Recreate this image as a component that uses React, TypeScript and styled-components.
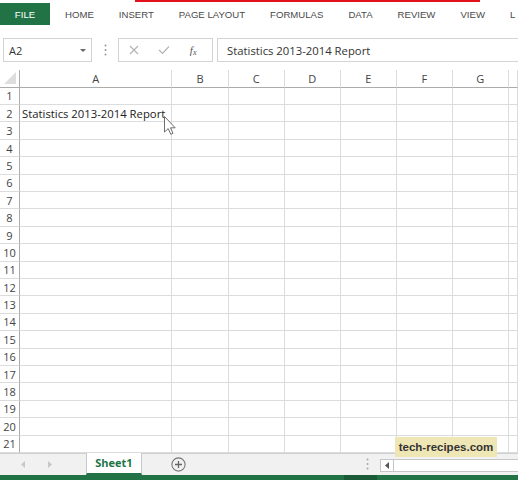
import React from "react";
import styled, { createGlobalStyle } from "styled-components";

const GlobalStyle = createGlobalStyle`
  html, body {
    margin: 0;
    padding: 0;
    background: #ffffff;
  }
  body {
    font-family: "Open Sans", "Noto Sans", sans-serif;
    color: #444444;
  }
  * {
    box-sizing: border-box;
  }
`;

const green = "#217346";
const gridLine = "#dadcdd";
const boxLine = "#d4d4d4";

const ribbonTabs = ["HOME", "INSERT", "PAGE LAYOUT", "FORMULAS", "DATA", "REVIEW", "VIEW", "L"];
const columns = ["A", "B", "C", "D", "E", "F", "G", ""];
const rowCount = 21;
const cellValues: Record<string, string> = { A2: "Statistics 2013-2014 Report" };

const App: React.FC = () => {
  const rows = Array.from({ length: rowCount }, (_, i) => i + 1);

  return (
    <>
      <GlobalStyle />
      <Window>
        <TabBar>
          <FileTab>FILE</FileTab>
          {ribbonTabs.map((t) => (
            <RibbonTab key={t}>{t}</RibbonTab>
          ))}
        </TabBar>

        <FormulaRow>
          <NameBox>
            <span>A2</span>
            <DropArrow />
          </NameBox>
          <Grip>
            <svg width="3" height="12" viewBox="0 0 3 12">
              <circle cx="1.5" cy="1.5" r="1" fill="#9a9a9a" />
              <circle cx="1.5" cy="6" r="1" fill="#9a9a9a" />
              <circle cx="1.5" cy="10.5" r="1" fill="#9a9a9a" />
            </svg>
          </Grip>
          <FnBox>
            <FnButton>
              <svg width="10" height="10" viewBox="0 0 10 10">
                <path d="M1 1 L9 9 M9 1 L1 9" stroke="#b4b4b4" strokeWidth="1.2" />
              </svg>
            </FnButton>
            <FnButton>
              <svg width="12" height="10" viewBox="0 0 12 10">
                <path d="M1 5 L4.5 8.5 L11 1.5" stroke="#b4b4b4" strokeWidth="1.2" fill="none" />
              </svg>
            </FnButton>
            <FnButton>
              <FxLabel>
                f<sub>x</sub>
              </FxLabel>
            </FnButton>
          </FnBox>
          <FormulaInput>Statistics 2013-2014 Report</FormulaInput>
        </FormulaRow>

        <Sheet>
          <Corner>
            <svg width="12" height="12" viewBox="0 0 12 12">
              <path d="M12 0 L12 12 L0 12 Z" fill="#dedede" />
            </svg>
          </Corner>
          {columns.map((c, i) => (
            <ColHead key={`h${i}`}>{c}</ColHead>
          ))}
          {rows.map((r) => (
            <React.Fragment key={r}>
              <RowHead>{r}</RowHead>
              {columns.map((c, i) => (
                <Cell key={`${r}-${i}`}>{c ? cellValues[`${c}${r}`] ?? "" : ""}</Cell>
              ))}
            </React.Fragment>
          ))}
        </Sheet>

        <SheetBar>
          <NavArrows>
            <svg width="5" height="7" viewBox="0 0 5 7">
              <path d="M4 0 L0 3.5 L4 7 Z" fill="#c8c8c8" />
            </svg>
            <svg width="5" height="7" viewBox="0 0 5 7">
              <path d="M1 0 L5 3.5 L1 7 Z" fill="#c8c8c8" />
            </svg>
          </NavArrows>
          <SheetTab>Sheet1</SheetTab>
          <AddSheet>
            <svg width="15" height="15" viewBox="0 0 15 15">
              <circle cx="7.5" cy="7.5" r="6.6" fill="none" stroke="#777" strokeWidth="1.1" />
              <path d="M7.5 4 V11 M4 7.5 H11" stroke="#666" strokeWidth="1.3" />
            </svg>
          </AddSheet>
          <ScrollGrip>
            <svg width="3" height="12" viewBox="0 0 3 12">
              <circle cx="1.5" cy="1.5" r="1" fill="#a8a8a8" />
              <circle cx="1.5" cy="6" r="1" fill="#a8a8a8" />
              <circle cx="1.5" cy="10.5" r="1" fill="#a8a8a8" />
            </svg>
          </ScrollGrip>
          <HScroll>
            <ScrollButton>
              <svg width="4" height="7" viewBox="0 0 4 7">
                <path d="M4 0 L0 3.5 L4 7 Z" fill="#555" />
              </svg>
            </ScrollButton>
          </HScroll>
        </SheetBar>

        <StatusBar>
          <StatusMark />
        </StatusBar>

        <Pointer width="12" height="19" viewBox="0 0 12 19">
          <path
            d="M0.5 0.5 L0.5 16 L4.2 12.6 L6.8 18.3 L9 17.3 L6.5 11.8 L11.2 11.8 Z"
            fill="#ffffff"
            stroke="#6e6e6e"
            strokeWidth="1"
            strokeLinejoin="round"
          />
        </Pointer>

        <Watermark>tech-recipes.com</Watermark>
      </Window>
    </>
  );
};

export default App;

const Window = styled.div`
  position: relative;
  width: 518px;
  height: 480px;
  overflow: hidden;
  display: flex;
  flex-direction: column;
  background: #ffffff;
`;

const TabBar = styled.div`
  position: relative;
  height: 26px;
  flex: none;
  display: flex;
  align-items: center;
  gap: 25px;
  padding-top: 2px;
  font-family: "Liberation Sans", Arial, sans-serif;
  font-size: 9.6px;
  color: #4a4a4a;
  white-space: nowrap;

  &::before {
    content: "";
    position: absolute;
    left: 135px;
    top: 0;
    width: 345px;
    height: 2px;
    background: #e3111b;
  }
`;

const FileTab = styled.div`
  flex: none;
  width: 50px;
  height: 22px;
  margin-right: -10px;
  display: flex;
  align-items: center;
  justify-content: center;
  background: ${green};
  color: #ffffff;
`;

const RibbonTab = styled.div`
  flex: none;
`;

const FormulaRow = styled.div`
  flex: none;
  height: 24px;
  margin-top: 12px;
  display: flex;
  align-items: stretch;
  font-size: 11px;
  color: #333333;
`;

const NameBox = styled.div`
  flex: none;
  width: 89px;
  margin-left: 3px;
  display: flex;
  align-items: center;
  justify-content: space-between;
  padding: 0 5px 0 5px;
  border: 1px solid ${boxLine};
`;

const DropArrow = styled.span`
  width: 0;
  height: 0;
  border-left: 3px solid transparent;
  border-right: 3px solid transparent;
  border-top: 3px solid #666666;
`;

const Grip = styled.div`
  flex: none;
  width: 26px;
  display: flex;
  align-items: center;
  justify-content: center;
`;

const ScrollGrip = styled(Grip)`
  margin-left: auto;
`;

const FnBox = styled.div`
  flex: none;
  width: 95px;
  display: flex;
  align-items: center;
  justify-content: space-around;
  padding: 0 4px 0 0;
  border: 1px solid ${boxLine};
`;

const FnButton = styled.div`
  width: 30px;
  display: flex;
  align-items: center;
  justify-content: center;
`;

const FxLabel = styled.span`
  font-family: "Liberation Serif", serif;
  font-style: italic;
  font-size: 11px;
  color: #555555;

  sub {
    font-size: 8px;
    vertical-align: -1px;
  }
`;

const FormulaInput = styled.div`
  flex: 1;
  margin-left: 4px;
  display: flex;
  align-items: center;
  padding-left: 9px;
  border: 1px solid ${boxLine};
  border-right: none;
  white-space: nowrap;
  font-size: 11.3px;
`;

const Sheet = styled.div`
  flex: none;
  margin-top: 8px;
  display: grid;
  grid-template-columns: 20px 152.3px 56.4px 56px 56px 56px 56.3px 55.7px 1fr;
  grid-template-rows: 17.7px;
  grid-auto-rows: 17.4px;
  font-size: 11px;
`;

const Corner = styled.div`
  display: flex;
  align-items: flex-end;
  justify-content: flex-end;
  padding: 0 3px 3px 0;
  border-right: 1px solid #ababab;
  border-bottom: 1px solid #ababab;
`;

const ColHead = styled.div`
  display: flex;
  align-items: center;
  justify-content: center;
  color: #444444;
  border-right: 1px solid ${gridLine};
  border-bottom: 1px solid #ababab;
`;

const RowHead = styled.div`
  display: flex;
  align-items: center;
  justify-content: center;
  color: #444444;
  border-right: 1px solid #ababab;
  border-bottom: 1px solid ${gridLine};
`;

const Cell = styled.div`
  display: flex;
  align-items: center;
  padding-left: 2px;
  color: #222222;
  font-size: 11.3px;
  white-space: nowrap;
  border-right: 1px solid ${gridLine};
  border-bottom: 1px solid ${gridLine};
`;

const SheetBar = styled.div`
  flex: none;
  height: 22px;
  margin-top: auto;
  display: flex;
  align-items: stretch;
  background: #f1f1f1;
  border-top: 1px solid #d0d0d0;
`;

const NavArrows = styled.div`
  flex: none;
  width: 86px;
  display: flex;
  align-items: center;
  padding-left: 21px;
  gap: 21px;
`;

const SheetTab = styled.div`
  flex: none;
  width: 56px;
  margin-top: -1px;
  display: flex;
  align-items: center;
  justify-content: center;
  background: #ffffff;
  color: ${green};
  font-size: 11px;
  font-weight: 700;
  border-left: 1px solid #c8c8c8;
  border-right: 1px solid #c8c8c8;
  border-bottom: 2px solid ${green};
`;

const AddSheet = styled.div`
  flex: none;
  width: 72px;
  display: flex;
  align-items: center;
  justify-content: center;
`;

const HScroll = styled.div`
  flex: none;
  width: 138px;
  margin: 5px 0 3px 0;
  display: flex;
  background: #ffffff;
  border: 1px solid #c6c6c6;
  border-right: none;
`;

const ScrollButton = styled.div`
  width: 13px;
  display: flex;
  align-items: center;
  justify-content: center;
  border-right: 1px solid #c6c6c6;
`;

const StatusBar = styled.div`
  flex: none;
  height: 6px;
  display: flex;
  background: ${green};
`;

const StatusMark = styled.div`
  width: 33px;
  margin-left: 344px;
  background: #1a5a36;
`;

const Pointer = styled.svg`
  position: absolute;
  left: 164px;
  top: 116px;
`;

const Watermark = styled.div`
  position: absolute;
  left: 395px;
  top: 437px;
  width: 102px;
  height: 20px;
  display: flex;
  align-items: center;
  justify-content: center;
  background: #efe6b6;
  color: #333333;
  font-family: "Liberation Sans", Arial, sans-serif;
  font-size: 11.5px;
  font-weight: 700;
`;
